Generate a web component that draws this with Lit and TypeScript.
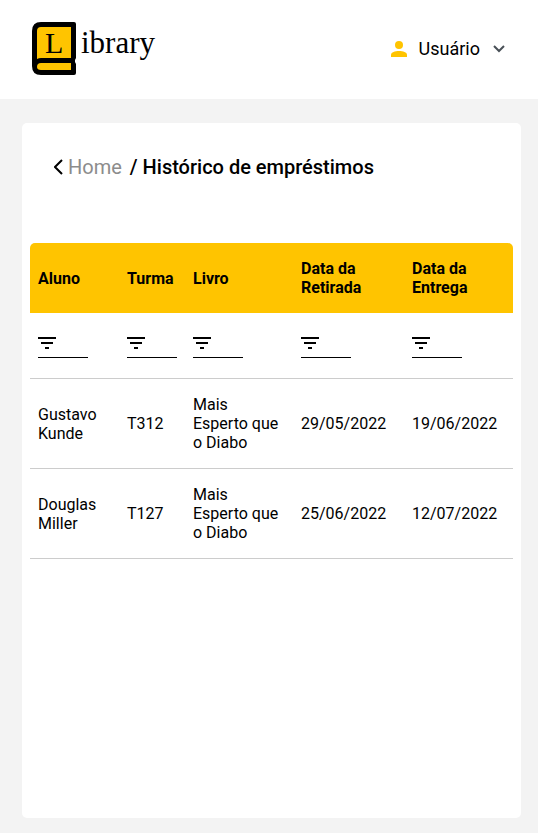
import { LitElement, html, css } from "lit";
import { customElement, state } from "lit/decorators.js";

interface Loan {
  aluno: string;
  turma: string;
  livro: string;
  retirada: string;
  entrega: string;
}

const COLUMNS: { key: keyof Loan; label: string }[] = [
  { key: "aluno", label: "Aluno" },
  { key: "turma", label: "Turma" },
  { key: "livro", label: "Livro" },
  { key: "retirada", label: "Data da Retirada" },
  { key: "entrega", label: "Data da Entrega" },
];

const LOANS: Loan[] = [
  { aluno: "Gustavo Kunde", turma: "T312", livro: "Mais Esperto que o Diabo", retirada: "29/05/2022", entrega: "19/06/2022" },
  { aluno: "Douglas Miller", turma: "T127", livro: "Mais Esperto que o Diabo", retirada: "25/06/2022", entrega: "12/07/2022" },
];

@customElement("library-header")
export class LibraryHeader extends LitElement {
  static styles = css`
    :host {
      display: block;
      background: #fff;
    }
    .bar {
      display: flex;
      align-items: center;
      justify-content: space-between;
      height: 99px;
      padding: 0 33px 2px 32px;
      box-sizing: border-box;
    }
    .logo {
      display: flex;
      align-items: flex-start;
      gap: 4px;
      color: #000;
      text-decoration: none;
      font-family: "Liberation Serif", serif;
    }
    .book {
      display: block;
    }
    .initial {
      font-size: 30px;
    }
    .rest {
      font-size: 31px;
      line-height: 42px;
    }
    .user {
      display: flex;
      align-items: center;
      padding: 0;
      border: 0;
      background: none;
      color: #000;
      font: 18px/24px Roboto, sans-serif;
      cursor: pointer;
    }
    .name {
      margin: 0 13px 0 12px;
    }
  `;

  render() {
    return html`
      <header class="bar">
        <a class="logo" href="#" aria-label="Library">
          <svg class="book" width="45" height="53" viewBox="0 0 45 53">
            <path d="M9 0H42Q44 0 44 2V36L43 38V40L44 42V51Q44 53 42 53H9Q0 53 0 44V9Q0 0 9 0Z" fill="#000" />
            <path d="M9 5H39V36H9Q7 36 5 37V9Q5 5 9 5Z" fill="#ffc400" />
            <path d="M9 41H39V48H9Q5 48 5 45Q5 41 9 41Z" fill="#ffc400" />
            <text class="initial" x="13" y="31">L</text>
          </svg>
          <span class="rest">ibrary</span>
        </a>
        <button class="user" type="button" aria-haspopup="menu">
          <svg width="16" height="16" viewBox="0 0 16 16" fill="#ffc400" aria-hidden="true">
            <circle cx="8" cy="4" r="4" />
            <path d="M0 16V14C0 11 4 10 8 10S16 11 16 14V16Z" />
          </svg>
          <span class="name">Usuário</span>
          <svg width="12" height="8" viewBox="0 0 12 8" fill="none" stroke="#495057" stroke-width="2" aria-hidden="true">
            <path d="M1 1L6 6L11 1" />
          </svg>
        </button>
      </header>
    `;
  }
}

@customElement("loan-table")
export class LoanTable extends LitElement {
  @state() private filters: Partial<Record<keyof Loan, string>> = {};

  static styles = css`
    :host {
      display: block;
    }
    table {
      width: 100%;
      table-layout: fixed;
      border-collapse: separate;
      border-spacing: 0;
      font-size: 16px;
      line-height: 19px;
    }
    .aluno { width: 89px; }
    .turma { width: 66px; }
    .livro { width: 108px; }
    .retirada { width: 111px; }
    .entrega { width: 109px; }
    th,
    td {
      padding: 16px 8px;
      text-align: left;
      vertical-align: middle;
    }
    th {
      background: #ffc400;
      font-weight: 700;
    }
    th:first-child {
      border-top-left-radius: 5px;
    }
    th:last-child {
      border-top-right-radius: 5px;
    }
    td {
      border-bottom: 1px solid #ccc;
    }
    .filter-cell {
      padding: 20px 8px;
    }
    .filter {
      display: flex;
      width: 50px;
      height: 25px;
      padding-top: 4px;
      box-sizing: border-box;
      border-bottom: 1px solid #000;
    }
    .filter svg {
      flex: none;
    }
    .filter input {
      width: 100%;
      min-width: 0;
      padding: 0 0 0 4px;
      border: 0;
      outline: 0;
      background: none;
      font: inherit;
    }
  `;

  private setFilter(key: keyof Loan, event: Event) {
    this.filters = { ...this.filters, [key]: (event.target as HTMLInputElement).value };
  }

  private get visibleLoans() {
    return LOANS.filter((loan) =>
      COLUMNS.every(({ key }) => loan[key].toLowerCase().includes((this.filters[key] ?? "").toLowerCase())),
    );
  }

  render() {
    return html`
      <table>
        <colgroup>
          ${COLUMNS.map(({ key }) => html`<col class=${key} />`)}
        </colgroup>
        <thead>
          <tr>${COLUMNS.map(({ label }) => html`<th scope="col">${label}</th>`)}</tr>
        </thead>
        <tbody>
          <tr>
            ${COLUMNS.map(
              ({ key, label }) => html`
                <td class="filter-cell">
                  <label class="filter">
                    <svg width="18" height="12" viewBox="0 0 18 12" aria-hidden="true">
                      <path d="M0 0H18V2H0ZM3 5H15V7H3ZM7 10H11V12H7Z" />
                    </svg>
                    <input type="text" aria-label=${label} @input=${(e: Event) => this.setFilter(key, e)} />
                  </label>
                </td>
              `,
            )}
          </tr>
          ${this.visibleLoans.map(
            (loan) => html`<tr>${COLUMNS.map(({ key }) => html`<td>${loan[key]}</td>`)}</tr>`,
          )}
        </tbody>
      </table>
    `;
  }
}

@customElement("app-root")
export class AppRoot extends LitElement {
  static styles = css`
    :host {
      display: flex;
      flex-direction: column;
      min-height: 100vh;
      background: #f3f3f3;
      color: #000;
      font-family: Roboto, sans-serif;
    }
    .card {
      flex: 1;
      margin: 24px 17px 15px 22px;
      padding: 32px 8px;
      border-radius: 5px;
      background: #fff;
    }
    .crumbs {
      display: flex;
      align-items: center;
      height: 24px;
      margin: 0 24px 64px;
      font-size: 20px;
      line-height: 24px;
    }
    .back {
      display: flex;
      align-items: center;
      gap: 5px;
      color: #8c8c8c;
      text-decoration: none;
    }
    .current {
      margin: 0 0 0 8px;
      font-size: 20px;
      font-weight: 500;
    }
  `;

  render() {
    return html`
      <library-header></library-header>
      <main class="card">
        <nav class="crumbs" aria-label="Navegação">
          <a class="back" href="#">
            <svg width="9" height="16" viewBox="0 0 9 16" fill="none" stroke="#000" stroke-width="2" aria-hidden="true">
              <path d="M8 1L1 8L8 15" />
            </svg>
            <span>Home</span>
          </a>
          <h1 class="current">/ Histórico de empréstimos</h1>
        </nav>
        <loan-table></loan-table>
      </main>
    `;
  }
}
